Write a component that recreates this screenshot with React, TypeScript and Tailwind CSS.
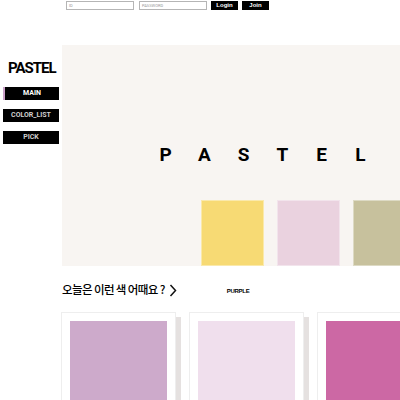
import React from 'react';

const heroSwatches = ['#f7da74', '#ead2df', '#c7c19d'];
const todayColors = ['#cdaacb', '#f0dfed', '#cc68a4'];

const menu = [
  { label: 'MAIN', active: true },
  { label: 'COLOR_LIST', active: false },
  { label: 'PICK', active: false },
];

const App: React.FC = () => {
  return (
    <div className="w-[400px] h-[400px] overflow-hidden bg-white text-black font-['Roboto',sans-serif]">
      {/* Login bar */}
      <div className="h-[45px] flex items-start pt-px pl-[66px] gap-[5px]">
        <div className="w-[68px] h-[9px] border border-[#b5b5b5] text-[4px] leading-[7px] pl-[2px] text-[#999]">ID</div>
        <div className="w-[68px] h-[9px] border border-[#b5b5b5] text-[4px] leading-[7px] pl-[2px] text-[#999]">PASSWORD</div>
        <button className="w-[27px] h-[9px] ml-[-1px] bg-black text-white text-[6px] leading-[9px] font-bold font-['Liberation_Sans',sans-serif]">Login</button>
        <button className="w-[27px] h-[9px] ml-[-1px] bg-black text-white text-[6px] leading-[9px] font-bold font-['Liberation_Sans',sans-serif]">Join</button>
      </div>

      <div className="flex">
        {/* Sidebar */}
        <div className="w-[62px] shrink-0 flex flex-col">
          <div className="mt-[14px] pl-[8px] text-[15px] leading-[18px] font-bold tracking-[-1px]">PASTEL</div>
          <div className="mt-[10px] flex flex-col gap-[9px] pl-[3px]">
            {menu.map((m) => (
              <div
                key={m.label}
                className={`w-[56px] h-[13px] bg-black flex items-center justify-center text-[7px] font-bold ${
                  m.active ? 'border-l-2 border-[#c9a0c8] text-white' : 'text-[#d0d0d0]'
                }`}
              >
                {m.label}
              </div>
            ))}
          </div>
        </div>

        {/* Main */}
        <div className="flex-1 min-w-0">
          <div className="h-[221px] bg-[#f8f5f2] flex flex-col overflow-hidden">
            <div className="mt-[99px] pl-[97px] flex gap-[26px] text-[19px] leading-[22px] font-bold">
              {'PASTEL'.split('').map((c, i) => (
                <span key={i} className="w-[13px] text-center">{c}</span>
              ))}
            </div>
            <div className="mt-auto pl-[139px] flex gap-[13px]">
              {heroSwatches.map((c) => (
                <div key={c} className="w-[63px] h-[66px] shrink-0 border border-white/40" style={{ backgroundColor: c }} />
              ))}
            </div>
          </div>

          <div className="mt-[16px] flex items-center h-[16px]">
            <span className="text-[11.5px] font-medium tracking-[-0.6px] font-['Noto_Sans_CJK_KR',sans-serif]">오늘은 이런 색 어때요 ?</span>
            <svg width="8" height="13" viewBox="0 0 8 13" className="ml-[4px]">
              <path d="M1.5 1 L6.5 6.5 L1.5 12" fill="none" stroke="#111" strokeWidth="1.5" />
            </svg>
            <span className="ml-[50px] mt-[3px] text-[6px] font-bold tracking-[-0.3px] font-['Liberation_Sans',sans-serif]">PURPLE</span>
          </div>

          <div className="mt-[14px] flex gap-[13px] -ml-px">
            {todayColors.map((c) => (
              <div key={c} className="w-[115px] h-[100px] shrink-0 bg-white border border-[#eeeeee] p-[8px] shadow-[5px_5px_0_#e5e1e0]">
                <div className="w-full h-full" style={{ backgroundColor: c }} />
              </div>
            ))}
          </div>
        </div>
      </div>
    </div>
  );
};

export default App;
